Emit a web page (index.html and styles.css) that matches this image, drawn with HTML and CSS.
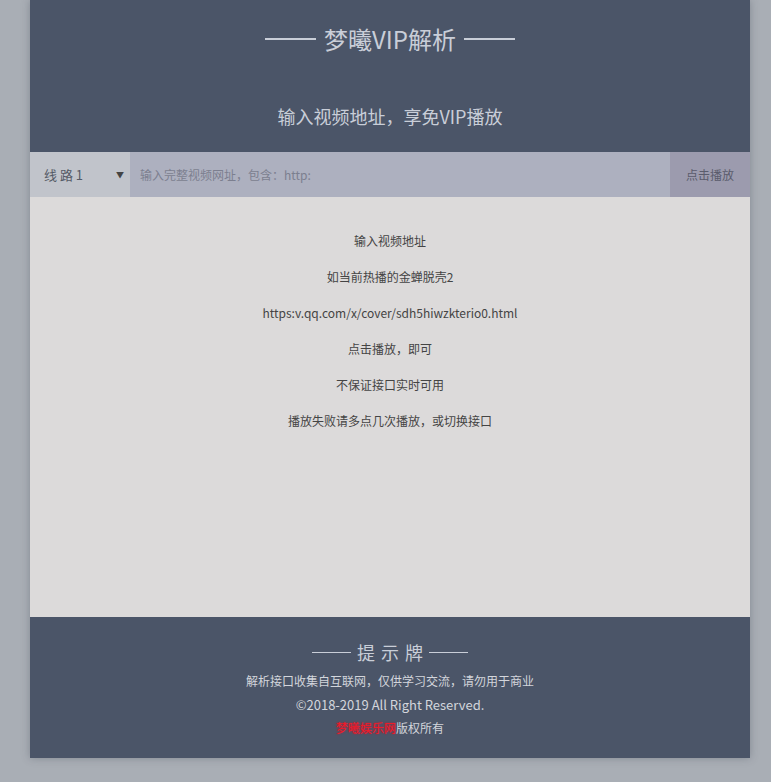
FILE: index.html
```html
<!DOCTYPE html>
<html lang="zh-CN">
<head>
<meta charset="utf-8">
<title>梦曦VIP解析</title>
<link rel="stylesheet" href="styles.css">
</head>
<body>
<div class="page">
  <div class="box">
    <header class="head">
      <h1 class="title"><span class="line"></span><span class="tword">梦曦VIP解析</span><span class="line"></span></h1>
      <p class="sub">输入视频地址，享免VIP播放</p>
    </header>
    <div class="bar">
      <div class="sel"><span>线 路 1</span><span class="caret">▼</span></div>
      <div class="inp">输入完整视频网址，包含：http:</div>
      <div class="btn">点击播放</div>
    </div>
    <main class="content">
      <p>输入视频地址</p>
      <p>如当前热播的金蝉脱壳2</p>
      <p>https:v.qq.com/x/cover/sdh5hiwzkterio0.html</p>
      <p>点击播放，即可</p>
      <p>不保证接口实时可用</p>
      <p>播放失败请多点几次播放，或切换接口</p>
    </main>
    <footer class="foot">
      <div class="ftitle"><span class="fline-s"></span><span class="fword">提示牌</span><span class="fline-s"></span></div>
      <p class="fline">解析接口收集自互联网，仅供学习交流，请勿用于商业</p>
      <p class="fline copy">©2018-2019 All Right Reserved.</p>
      <p class="fline last"><span class="red">梦曦娱乐网</span>版权所有</p>
    </footer>
  </div>
</div>
</body>
</html>
```
FILE: styles.css
```css
html, body {
  margin: 0;
  padding: 0;
}
body {
  background: #a9aeb5;
  font-family: "Noto Sans CJK SC", "Noto Sans", sans-serif;
  min-height: 782px;
}
.page {
  display: flex;
  padding-left: 30px;
}
.box {
  width: 720px;
  box-shadow: 0 0 8px rgba(60, 65, 80, 0.35);
}
.head {
  background: #4b5568;
  height: 152px;
  box-sizing: border-box;
  padding-top: 23px;
  text-align: center;
  color: #c9ced8;
}
.title {
  margin: 0;
  font-size: 24px;
  font-weight: normal;
  line-height: 32px;
  display: flex;
  justify-content: center;
  align-items: center;
}
.line {
  width: 51px;
  height: 2px;
  background: #c9ced8;
}
.tword {
  margin: 0 8px;
}
.sub {
  margin: 45px 0 0;
  font-size: 18px;
  line-height: 32px;
}
.bar {
  display: flex;
  height: 45px;
  font-size: 12px;
}
.sel {
  width: 100px;
  background: #c1c4cb;
  display: flex;
  align-items: center;
  justify-content: space-between;
  box-sizing: border-box;
  padding: 0 6px 0 14px;
  color: #555a66;
  font-size: 13px;
}
.caret {
  font-size: 8px;
  color: #444;
}
.inp {
  flex: 1;
  background: #adb0bf;
  display: flex;
  align-items: center;
  padding-left: 10px;
  color: #7c7f8f;
}
.btn {
  width: 80px;
  background: #9c9bae;
  display: flex;
  align-items: center;
  justify-content: center;
  color: #5a5c6c;
}
.content {
  background: #dcdada;
  height: 420px;
  box-sizing: border-box;
  padding-top: 26px;
  text-align: center;
  color: #444;
  font-size: 12px;
}
.content p {
  margin: 0;
  line-height: 36px;
}
.foot {
  background: #4b5568;
  height: 141px;
  box-sizing: border-box;
  padding-top: 22px;
  text-align: center;
  color: #d3d6dc;
}
.ftitle {
  font-size: 18px;
  line-height: 26px;
  margin-bottom: 4px;
  display: flex;
  justify-content: center;
  align-items: center;
  color: #c9ced8;
}
.fline-s {
  width: 39px;
  height: 1px;
  background: #c9ced8;
}
.fword {
  letter-spacing: 6px;
  margin: 0 0 0 6px;
}
.fline {
  margin: 0;
  font-size: 12px;
  line-height: 24px;
}
.copy {
  font-size: 13px;
}
.last {
  line-height: 22px;
}
.red {
  color: #ee1c2a;
  text-shadow: 0 0 2px #d0102a;
}
```
